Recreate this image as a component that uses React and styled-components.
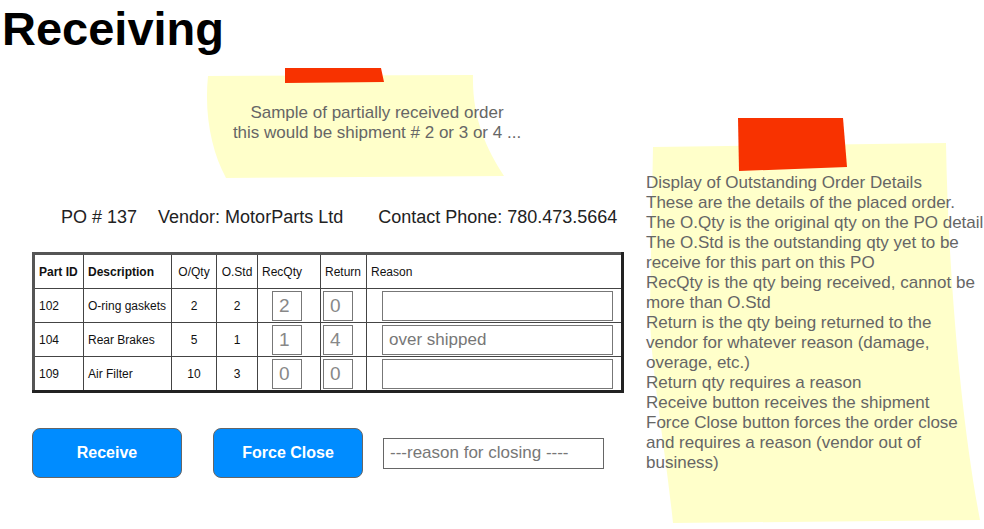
import React from "react";
import styled, { createGlobalStyle } from "styled-components";

const GlobalStyle = createGlobalStyle`
  body {
    margin: 0;
    font-family: "Liberation Sans", Arial, sans-serif;
    background: #fff;
  }
`;

const rows = [
  { id: "102", desc: "O-ring gaskets", oqty: 2, ostd: 2, rec: "2", ret: "0", reason: "" },
  { id: "104", desc: "Rear Brakes", oqty: 5, ostd: 1, rec: "1", ret: "4", reason: "over shipped" },
  { id: "109", desc: "Air Filter", oqty: 10, ostd: 3, rec: "0", ret: "0", reason: "" },
];

const noteLines = [
  "Display of Outstanding Order Details",
  "These are the details of the placed order.",
  "The O.Qty is the original qty on the PO detail",
  "The O.Std is the outstanding qty yet to be",
  "receive for this part on this PO",
  "RecQty is the qty being received, cannot be",
  "more than O.Std",
  "Return is the qty being returned to the",
  "vendor for whatever reason (damage,",
  "overage, etc.)",
  "Return qty requires a reason",
  "Receive button receives the shipment",
  "Force Close button forces the order close",
  "and requires a reason (vendor out of",
  "business)",
];

const App = () => {
  return (
    <>
      <GlobalStyle />
      <Canvas>
        <Title>Receiving</Title>

        <Main>
          <PoInfo>
            <span>PO # 137</span>
            <span>Vendor: MotorParts Ltd</span>
            <PhoneText>Contact Phone: 780.473.5664</PhoneText>
          </PoInfo>

          <Table>
            <colgroup>
              <col style={{ width: 50 }} />
              <col style={{ width: 88 }} />
              <col style={{ width: 45 }} />
              <col style={{ width: 41 }} />
              <col style={{ width: 63 }} />
              <col style={{ width: 46 }} />
              <col />
            </colgroup>
            <thead>
              <tr>
                <Th $bold>Part ID</Th>
                <Th $bold>Description</Th>
                <Th $center>O/Qty</Th>
                <Th $center>O.Std</Th>
                <Th>RecQty</Th>
                <Th>Return</Th>
                <Th>Reason</Th>
              </tr>
            </thead>
            <tbody>
              {rows.map((row) => (
                <tr key={row.id}>
                  <Td>{row.id}</Td>
                  <Td>{row.desc}</Td>
                  <Td $center>{row.oqty}</Td>
                  <Td $center>{row.ostd}</Td>
                  <InputCell $pad={14}>
                    <QtyInput defaultValue={row.rec} />
                  </InputCell>
                  <InputCell $pad={2}>
                    <QtyInput defaultValue={row.ret} />
                  </InputCell>
                  <InputCell $pad={15}>
                    <ReasonInput defaultValue={row.reason} />
                  </InputCell>
                </tr>
              ))}
            </tbody>
          </Table>

          <Actions>
            <Btn>Receive</Btn>
            <Btn>Force Close</Btn>
            <CloseReason placeholder="---reason for closing ----" />
          </Actions>
        </Main>

        <Note $left={200} $top={66} $w={354} $h={115}>
          <NoteShape width="354" height="115" viewBox="0 0 354 115">
            <path d="M8 10 L273 9 C272 52 286 82 304 110 L26 112 C12 86 4 50 8 10 Z" fill="#ffffca" />
            <path d="M85 2 L181 2 L184 16 L85 17 Z" fill="#f83200" />
          </NoteShape>
          <NoteText $padTop={37} $padLeft={0} $center>
            Sample of partially received order
            <br />
            this would be shipment # 2 or 3 or 4 ...
          </NoteText>
        </Note>

        <Note $left={640} $top={115} $w={344} $h={414}>
          <NoteShape width="344" height="414" viewBox="0 0 344 414">
            <path d="M13 32 L306 28 C308 150 320 300 340 405 L33 408 C25 330 10 250 10 195 L13 32 Z" fill="#ffffca" />
            <path d="M98 3 L203 3 L207 52 L99 56 Z" fill="#f83200" />
          </NoteShape>
          <NoteText $padTop={58} $padLeft={6}>
            {noteLines.map((line) => (
              <div key={line}>{line}</div>
            ))}
          </NoteText>
        </Note>
      </Canvas>
    </>
  );
};

const Canvas = styled.div`
  position: relative;
  width: 984px;
  height: 529px;
  overflow: hidden;
`;

const Title = styled.h1`
  margin: 0;
  padding: 1px 0 0 2px;
  font-size: 47px;
  font-weight: 700;
  color: #000;
  line-height: 55px;
`;

const Main = styled.div`
  display: flex;
  flex-direction: column;
  padding: 151px 0 0 32px;
`;

const PoInfo = styled.div`
  display: flex;
  gap: 21px;
  padding-left: 29px;
  font-size: 18px;
  color: #222;
  line-height: 20px;
`;

const PhoneText = styled.span`
  margin-left: 14px;
`;

const Table = styled.table`
  margin-top: 25px;
  width: 592px;
  table-layout: fixed;
  border-collapse: collapse;
  border: 3px solid #222;
  border-top-color: #555;
  border-left-color: #555;
  font-size: 12px;
  color: #111;
`;

const Th = styled.th`
  height: 33px;
  padding: 0 4px;
  border: 1.5px solid #444;
  font-weight: ${(p) => (p.$bold ? 700 : 400)};
  text-align: ${(p) => (p.$center ? "center" : "left")};
`;

const Td = styled.td`
  height: 33px;
  padding: 0 4px;
  border: 1.5px solid #444;
  text-align: ${(p) => (p.$center ? "center" : "left")};
`;

const InputCell = styled.td`
  height: 33px;
  padding: 0 0 0 ${(p) => p.$pad}px;
  border: 1.5px solid #444;
`;

const QtyInput = styled.input`
  box-sizing: border-box;
  display: block;
  width: 30px;
  height: 30px;
  padding: 0 0 0 6px;
  border: 1px solid #777;
  font-family: "Liberation Sans", Arial, sans-serif;
  font-size: 19px;
  color: #888;
  background: #fff;
`;

const ReasonInput = styled.input`
  box-sizing: border-box;
  display: block;
  width: 231px;
  height: 30px;
  padding: 0 6px;
  border: 1px solid #777;
  font-family: "Liberation Sans", Arial, sans-serif;
  font-size: 17px;
  color: #777;
  background: #fff;
`;

const Actions = styled.div`
  display: flex;
  align-items: center;
  gap: 31px;
  margin-top: 35px;
`;

const Btn = styled.button`
  width: 150px;
  height: 50px;
  border: 1px solid #666;
  border-radius: 8px;
  background: #008cff;
  color: #fff;
  font-family: "Liberation Sans", Arial, sans-serif;
  font-size: 16px;
  font-weight: 700;
  cursor: pointer;
`;

const CloseReason = styled.input`
  box-sizing: border-box;
  width: 221px;
  height: 31px;
  margin-left: -11px;
  padding: 0 6px;
  border: 1px solid #666;
  font-family: "Liberation Sans", Arial, sans-serif;
  font-size: 17px;
  color: #777;

  &::placeholder {
    color: #777;
  }
`;

const Note = styled.div`
  position: absolute;
  left: ${(p) => p.$left}px;
  top: ${(p) => p.$top}px;
  width: ${(p) => p.$w}px;
  height: ${(p) => p.$h}px;
  box-sizing: border-box;
`;

const NoteShape = styled.svg`
  position: absolute;
  inset: 0;
`;

const NoteText = styled.div`
  position: relative;
  padding: ${(p) => p.$padTop}px 0 0 ${(p) => p.$padLeft}px;
  font-size: 17px;
  line-height: 20px;
  color: #666;
  text-align: ${(p) => (p.$center ? "center" : "left")};
  white-space: nowrap;
`;

export default App;
